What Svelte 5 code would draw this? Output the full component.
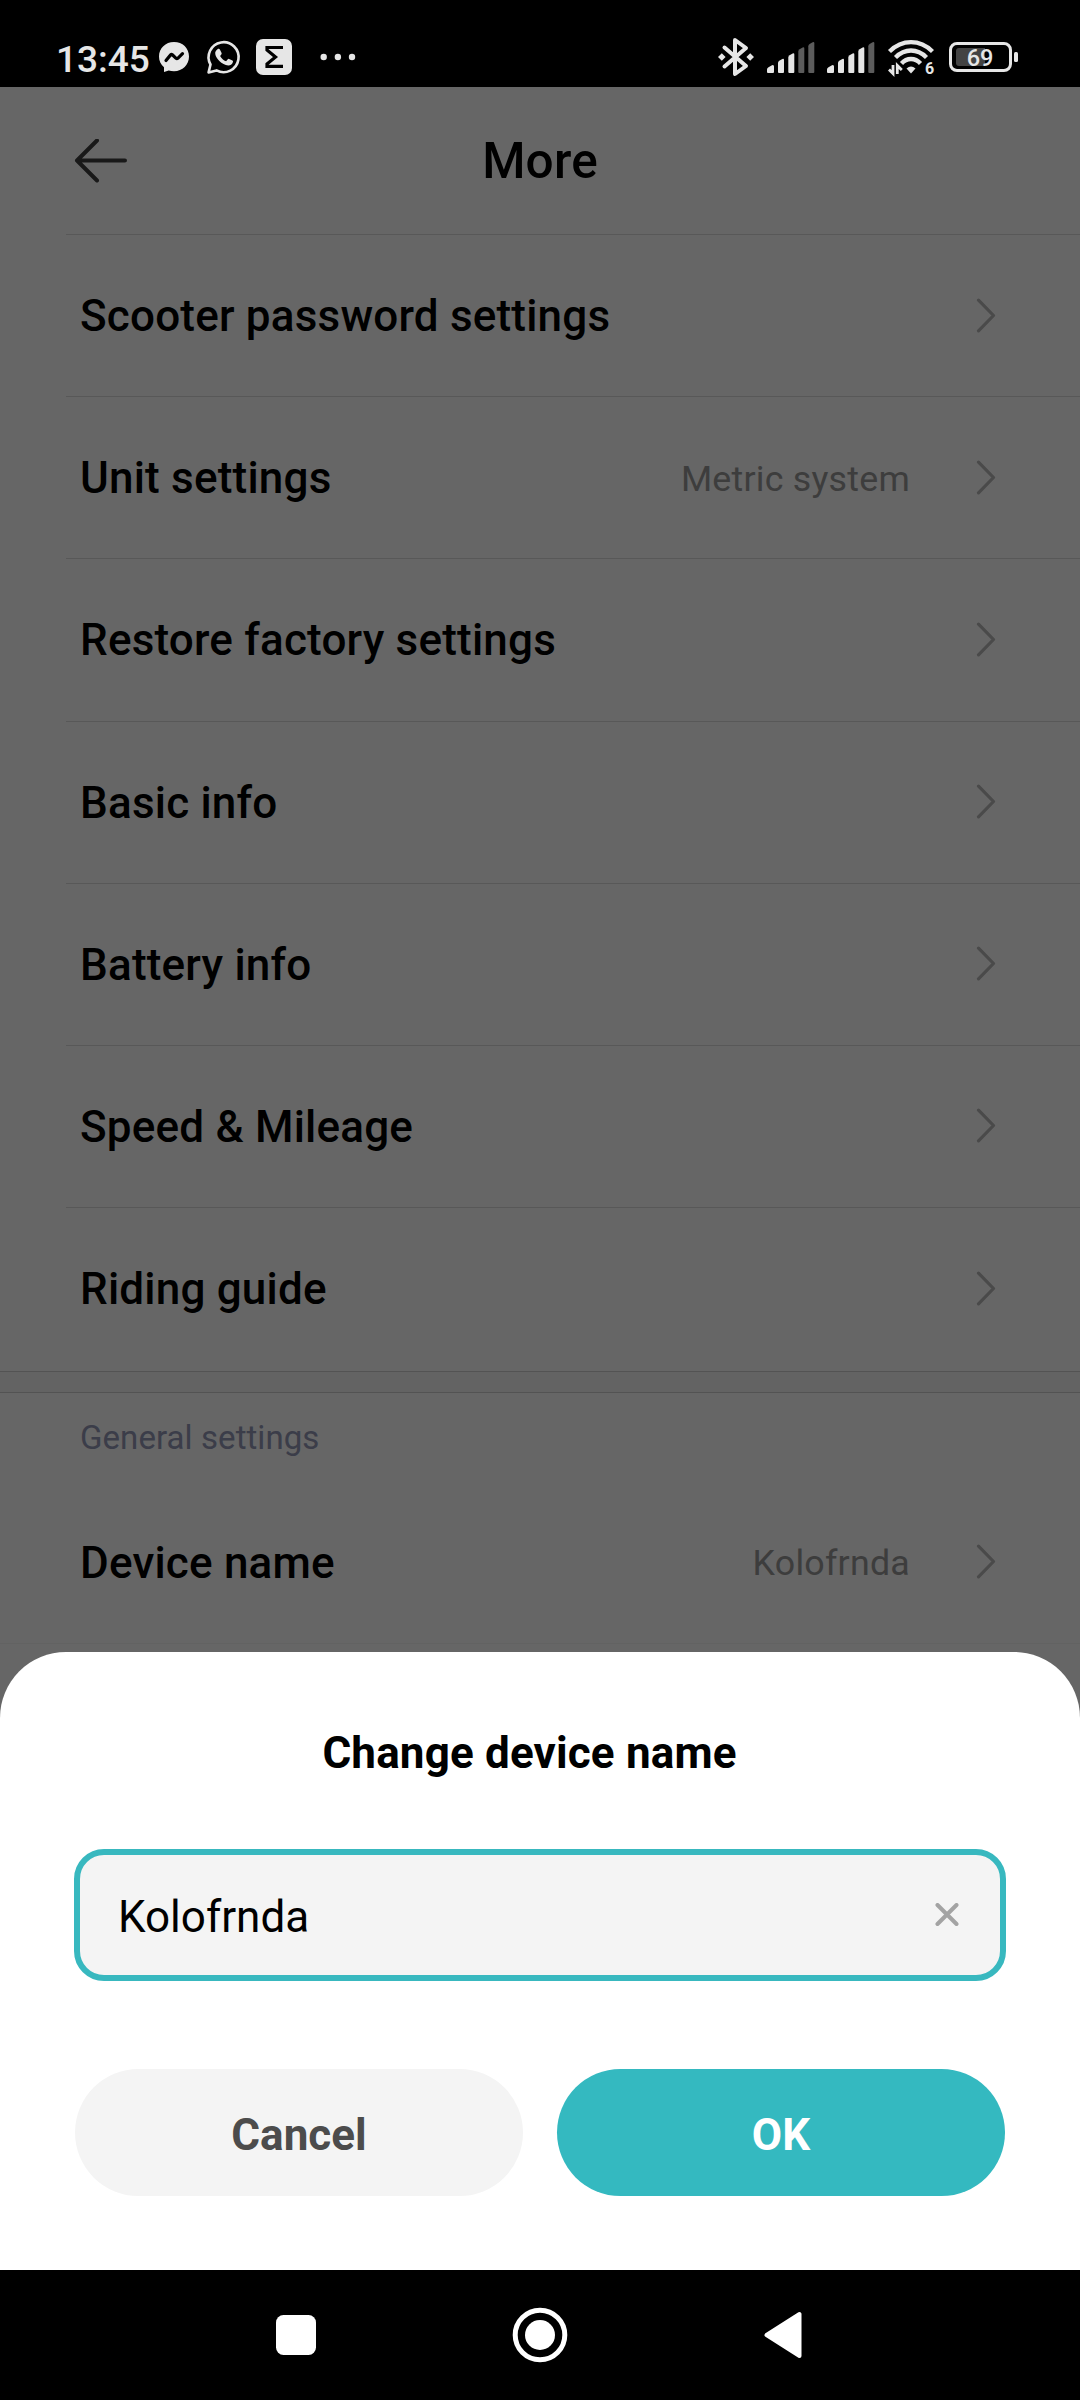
<script lang="ts">
	type Row = { label: string; value?: string };

	const rows: Row[] = [
		{ label: 'Scooter password settings' },
		{ label: 'Unit settings', value: 'Metric system' },
		{ label: 'Restore factory settings' },
		{ label: 'Basic info' },
		{ label: 'Battery info' },
		{ label: 'Speed & Mileage' },
		{ label: 'Riding guide' }
	];

	// number of lit bars for each SIM
	const signals = [3, 4];
	const bars = [
		'M0 30v-2.500q0-1.500 1.500-2.300l3.500-2q2-.8 2 1.300v5.500q0 1-1 1h-5q-1 0-1-1z',
		'M11 30v-9q0-1.500 1.300-2.300l3-1.700q1.700-.8 1.700 1v12q0 1-1 1h-4q-1 0-1-1z',
		'M21.300 30v-14.500q0-1.500 1.300-2.300l3-1.700q1.700-.8 1.700 1v17.500q0 1-1 1h-4q-1 0-1-1z',
		'M31.300 30v-20.500q0-1.500 1.300-2.300l3-1.700q1.700-.8 1.700 1v23.500q0 1-1 1h-4q-1 0-1-1z',
		'M41.300 30v-25.800q0-1.500 1.300-2.300l3-1.700q1.700-.8 1.700 1v28.800q0 1-1 1h-4q-1 0-1-1z'
	];

	let deviceName = $state('Kolofrnda');
</script>

{#snippet item(row: Row)}
	<div class="row">
		<span class="label">{row.label}</span>
		{#if row.value}
			<span class="value">{row.value}</span>
		{/if}
		<svg class="chevron" width="20" height="36" viewBox="0 0 20 36">
			<path d="M2.500 2.200L17.500 17.500L2.500 32.800" />
		</svg>
	</div>
{/snippet}

<div class="screen">
	<div class="status-bar">
		<span class="time">13:45</span>
		<svg class="messenger" width="30" height="30" viewBox="0 0 30 30">
			<path
				fill="#e6e6e6"
				d="M15 0C6.500 0 0 6.200 0 14.500c0 4.400 1.800 8 5 10.700V30l4.700-1.600c1.700.5 3.400.8 5.300.8 8.500 0 15-6.300 15-14.700S23.500 0 15 0z"
			/>
			<path
				d="M7 18.500l4.600-5.600q.8-.8 1.800-.1l3.700 3.500q.8.700 1.700 0l4.700-4.700"
				fill="none"
				stroke="#000"
				stroke-width="3.200"
				stroke-linecap="round"
			/>
		</svg>
		<svg class="whatsapp" width="34" height="34" viewBox="0 0 34 34">
			<path
				d="M1.600 32.400L3.500 24.500A15 15 0 1 1 9.500 30.400z"
				fill="none"
				stroke="#e6e6e6"
				stroke-width="2.600"
				stroke-linejoin="round"
			/>
			<path
				fill="#e6e6e6"
				d="M10.500 9.200c.8-.5 2-.5 2.500.5l1.600 3.200c.3.800-.1 1.400-1.500 3 1.500 2.700 3.300 4.300 6 5.300l1.700-2q.5-.7 1.300-.3l3.300 1.600q.8.400.6 1.200c-.4 2.300-2.300 3.700-4.800 3.700C15.200 25.200 8 18 8.200 13c0-1.500 1.100-3 2.300-3.800z"
			/>
		</svg>
		<svg class="sigma" width="36" height="36" viewBox="0 0 36 36">
			<rect width="36" height="36" rx="7" fill="#e6e6e6" />
			<path d="M27 8.500H11V11L19.500 18L11 25V27.300H27" fill="none" stroke="#000" stroke-width="3.200" />
		</svg>
		<svg class="dots" width="36" height="8" viewBox="0 0 36 8" fill="#e6e6e6">
			<circle cx="3.700" cy="4" r="3.200" />
			<circle cx="17.900" cy="4" r="3.200" />
			<circle cx="32" cy="4" r="3.200" />
		</svg>

		<svg class="bluetooth" width="36" height="40" viewBox="0 0 36 40">
			<path
				d="M6.500 10.500L28 29L17 37V3L28 11L6.500 29.500"
				fill="none"
				stroke="#e6e6e6"
				stroke-width="4"
				stroke-linejoin="round"
				stroke-linecap="round"
			/>
			<path d="M0 20l3.800-3.800L7.600 20l-3.800 3.800zM28.400 20l3.800-3.800L36 20l-3.800 3.800z" fill="#e6e6e6" />
		</svg>
		<div class="signals">
			{#each signals as lit}
				<svg width="48" height="31" viewBox="0 0 48 31">
					{#each bars as bar, i}
						<path d={bar} fill={i < lit ? '#e6e6e6' : '#5c5c5c'} />
					{/each}
				</svg>
			{/each}
		</div>
		<svg class="wifi" width="47" height="36" viewBox="0 0 47 36">
			<g fill="none" stroke="#e6e6e6" stroke-width="4.300">
				<path d="M1.500 12.500Q11 3.200 23 3.200T44.500 12.500" />
				<path d="M7.500 18.500Q14.500 11.500 23 11.500T38.500 18.500" />
				<path d="M13.500 24.500Q17.500 20 23 20T32.500 24.500" />
			</g>
			<path d="M18.500 29.500Q23 25.500 27.500 29.500L23 34.500z" fill="#e6e6e6" />
			<path d="M5 26v8.500L1 30.500M9.300 35v-8.500l4.500 4.500" fill="none" stroke="#e6e6e6" stroke-width="2.800" />
			<text x="37" y="34.500">6</text>
		</svg>
		<svg class="battery" width="70" height="30" viewBox="0 0 70 30">
			<rect x="1.500" y="1.500" width="60" height="27" rx="6.500" fill="none" stroke="#e6e6e6" stroke-width="3" />
			<path d="M10 6h26v18H10q-3 0-3-3V9q0-3 3-3z" fill="#434343" />
			<rect x="65" y="10" width="4" height="10" rx="1.500" fill="#e6e6e6" />
			<text x="31" y="24" text-anchor="middle">69</text>
		</svg>
	</div>

	<div class="page">
		<header>
			<svg class="back" width="56" height="44" viewBox="0 0 56 44">
				<path d="M25 1.500L5 21.500L25 41.500M5 21.500H53" />
			</svg>
			<h1>More</h1>
		</header>

		<div class="list">
			{#each rows as row}
				{@render item(row)}
			{/each}
		</div>

		<div class="gap"></div>

		<h2>General settings</h2>
		<div class="general">
			{@render item({ label: 'Device name', value: deviceName })}
		</div>

		<div class="scrim"></div>
	</div>

	<div class="sheet">
		<h3>Change device name</h3>
		<div class="field">
			<input type="text" bind:value={deviceName} />
			<svg width="24" height="24" viewBox="0 0 24 24">
				<path d="M2.500 2L21.500 21M21.500 2L2.500 21" />
			</svg>
		</div>
		<div class="buttons">
			<button class="cancel">Cancel</button>
			<button class="ok">OK</button>
		</div>
	</div>

	<nav>
		<svg width="40" height="40" viewBox="0 0 40 40">
			<rect width="40" height="40" rx="7.500" fill="#fff" />
		</svg>
		<svg width="56" height="56" viewBox="0 0 56 56">
			<circle cx="28" cy="28" r="24.800" fill="none" stroke="#fff" stroke-width="5" />
			<circle cx="28" cy="28" r="15" fill="#fff" />
		</svg>
		<svg width="38" height="48" viewBox="0 0 38 48">
			<path d="M2.500 24L35.500 3V45z" fill="#fff" stroke="#fff" stroke-width="4" stroke-linejoin="round" />
		</svg>
	</nav>
</div>

<style>
	:global(body) {
		margin: 0;
		background: #000;
	}

	.screen {
		display: flex;
		flex-direction: column;
		width: 1080px;
		height: 2400px;
		overflow: hidden;
		font-family: Roboto, 'Liberation Sans', sans-serif;
		background: #000;
	}

	h1,
	h2,
	h3 {
		margin: 0;
	}

	/* status bar */
	.status-bar {
		display: flex;
		flex: none;
		align-items: center;
		box-sizing: border-box;
		height: 87px;
		padding: 27px 61px 0 56px;
		color: #e6e6e6;
	}

	.status-bar svg {
		flex: none;
		overflow: visible;
	}

	.time {
		width: 103px;
		padding-top: 5px;
		font-size: 37px;
		font-weight: 500;
		line-height: 54px;
	}

	.whatsapp {
		margin-left: 18px;
	}

	.sigma {
		margin-left: 15px;
	}

	.dots {
		margin-left: 28px;
	}

	.bluetooth {
		margin-left: auto;
	}

	.signals {
		display: flex;
		gap: 12px;
		margin: 0 13px;
	}

	.wifi text {
		font-size: 16px;
		font-weight: 700;
		fill: #e6e6e6;
	}

	.battery {
		margin-left: 14px;
	}

	.battery text {
		font-size: 23.500px;
		font-weight: 500;
		fill: #e6e6e6;
	}

	/* settings page, its last 100px lie under the sheet */
	.page {
		position: relative;
		flex: none;
		height: 1665px;
		background: #fff;
	}

	.scrim {
		position: absolute;
		inset: 0;
		background: rgba(0, 0, 0, 0.6);
	}

	header {
		display: grid;
		grid-template-columns: 56px 1fr 56px;
		align-items: center;
		height: 147.100px;
		padding: 0 72px;
	}

	.back path {
		fill: none;
		stroke: #404040;
		stroke-width: 4;
		stroke-linecap: round;
		stroke-linejoin: round;
	}

	h1 {
		font-size: 49.500px;
		font-weight: 500;
		letter-spacing: 0.200px;
		text-align: center;
	}

	.list {
		padding-bottom: 1.700px;
	}

	.list .row {
		margin-left: 66px;
		padding-left: 14px;
		border-top: 1px solid #dcdcdc;
	}

	.row {
		display: flex;
		align-items: center;
		box-sizing: border-box;
		height: 162.170px;
		padding-right: 84px;
	}

	.label {
		flex: 1;
		padding-top: 1px;
		font-size: 44px;
		font-weight: 500;
		letter-spacing: 0.200px;
	}

	.value {
		margin-right: 66px;
		padding-top: 2px;
		font-size: 35.750px;
		letter-spacing: 0.230px;
		color: #999;
	}

	.chevron path {
		fill: none;
		stroke: #b8b8b8;
		stroke-width: 3.200;
		stroke-linecap: round;
		stroke-linejoin: round;
	}

	.gap {
		height: 20px;
		border: solid #d0d0d0;
		border-width: 1px 0;
		background: #f7f7f7;
	}

	h2 {
		padding: 1px 80px 0;
		font-size: 33px;
		font-weight: 400;
		line-height: 88px;
		letter-spacing: 0.070px;
		color: #9398b6;
	}

	.general .row {
		padding-left: 80px;
		border-bottom: 1px solid #f4f4f4;
	}

	/* bottom sheet */
	.sheet {
		position: relative;
		flex: none;
		box-sizing: border-box;
		height: 618px;
		margin-top: -100px;
		padding: 0 74px;
		border-radius: 66px 66px 0 0;
		background: #fff;
	}

	h3 {
		margin-right: 21px;
		padding-top: 6px;
		font-size: 44px;
		font-weight: 700;
		line-height: 191px;
		letter-spacing: 0.160px;
		text-align: center;
	}

	.field {
		display: flex;
		align-items: center;
		box-sizing: border-box;
		height: 132px;
		padding: 0 41px 0 38px;
		border: 6px solid #38b8bf;
		border-radius: 30px;
		background: #f4f4f4;
	}

	input {
		flex: 1;
		min-width: 0;
		padding: 3px 0 0;
		border: 0;
		outline: 0;
		font: 400 44px Roboto, 'Liberation Sans', sans-serif;
		color: #000;
		background: none;
	}

	.field path {
		stroke: #a3a3a3;
		stroke-width: 4;
		stroke-linecap: round;
	}

	.buttons {
		display: flex;
		gap: 34px;
		margin-top: 88px;
		padding: 0 1px;
	}

	button {
		flex: 1;
		height: 127px;
		padding: 5px 0 0;
		border: 0;
		border-radius: 64px;
		font: 700 44px Roboto, 'Liberation Sans', sans-serif;
	}

	.cancel {
		color: #4c4c4c;
		background: #f4f4f4;
	}

	.ok {
		color: #fff;
		background: #34b9c0;
	}

	/* navigation */
	nav {
		display: flex;
		flex: none;
		align-items: center;
		justify-content: space-between;
		height: 130px;
		padding: 0 278px 0 276px;
	}
</style>
